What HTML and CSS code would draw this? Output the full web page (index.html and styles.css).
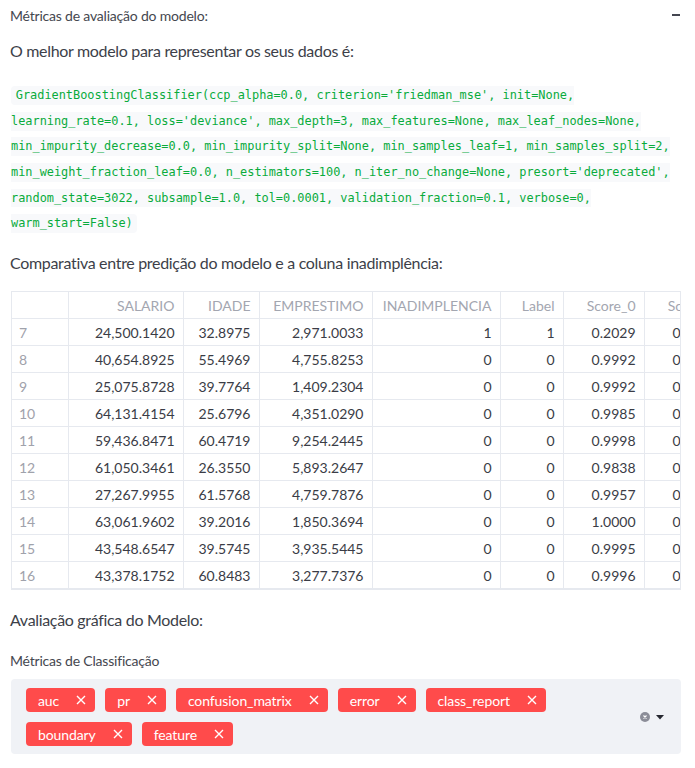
FILE: index.html
```html
<!DOCTYPE html>
<html lang="pt">
<head>
<meta charset="utf-8">
<title>Métricas</title>
<link rel="stylesheet" href="styles.css">
</head>
<body>
<div class="page">
  <div class="exp-head">
    <span>Métricas de avaliação do modelo:</span>
    <span class="minus"></span>
  </div>
  <p class="p1">O melhor modelo para representar os seus dados é:</p>
  <p class="codep"><code>GradientBoostingClassifier(ccp_alpha=0.0, criterion='friedman_mse', init=None, learning_rate=0.1, loss='deviance', max_depth=3, max_features=None, max_leaf_nodes=None, min_impurity_decrease=0.0, min_impurity_split=None, min_samples_leaf=1, min_samples_split=2, min_weight_fraction_leaf=0.0, n_estimators=100, n_iter_no_change=None, presort='deprecated', random_state=3022, subsample=1.0, tol=0.0001, validation_fraction=0.1, verbose=0, warm_start=False)</code></p>
  <p class="p2">Comparativa entre predição do modelo e a coluna inadimplência:</p>
  <div class="table-wrap">
    <table class="df">
      <colgroup>
        <col class="c-idx"><col class="c-sal"><col class="c-ida"><col class="c-emp"><col class="c-ina"><col class="c-lab"><col class="c-s0"><col class="c-s1">
      </colgroup>
      <thead>
        <tr><th></th><th>SALARIO</th><th>IDADE</th><th>EMPRESTIMO</th><th>INADIMPLENCIA</th><th>Label</th><th>Score_0</th><th>Score_1</th></tr>
      </thead>
      <tbody>
        <tr><td class="idx">7</td><td>24,500.1420</td><td>32.8975</td><td>2,971.0033</td><td>1</td><td>1</td><td>0.2029</td><td>0.7971</td></tr>
        <tr><td class="idx">8</td><td>40,654.8925</td><td>55.4969</td><td>4,755.8253</td><td>0</td><td>0</td><td>0.9992</td><td>0.0008</td></tr>
        <tr><td class="idx">9</td><td>25,075.8728</td><td>39.7764</td><td>1,409.2304</td><td>0</td><td>0</td><td>0.9992</td><td>0.0008</td></tr>
        <tr><td class="idx">10</td><td>64,131.4154</td><td>25.6796</td><td>4,351.0290</td><td>0</td><td>0</td><td>0.9985</td><td>0.0015</td></tr>
        <tr><td class="idx">11</td><td>59,436.8471</td><td>60.4719</td><td>9,254.2445</td><td>0</td><td>0</td><td>0.9998</td><td>0.0002</td></tr>
        <tr><td class="idx">12</td><td>61,050.3461</td><td>26.3550</td><td>5,893.2647</td><td>0</td><td>0</td><td>0.9838</td><td>0.0162</td></tr>
        <tr><td class="idx">13</td><td>27,267.9955</td><td>61.5768</td><td>4,759.7876</td><td>0</td><td>0</td><td>0.9957</td><td>0.0043</td></tr>
        <tr><td class="idx">14</td><td>63,061.9602</td><td>39.2016</td><td>1,850.3694</td><td>0</td><td>0</td><td>1.0000</td><td>0.0000</td></tr>
        <tr><td class="idx">15</td><td>43,548.6547</td><td>39.5745</td><td>3,935.5445</td><td>0</td><td>0</td><td>0.9995</td><td>0.0005</td></tr>
        <tr><td class="idx">16</td><td>43,378.1752</td><td>60.8483</td><td>3,277.7376</td><td>0</td><td>0</td><td>0.9996</td><td>0.0004</td></tr>
      </tbody>
    </table>
  </div>
  <p class="p3">Avaliação gráfica do Modelo:</p>
  <div class="ms-label">Métricas de Classificação</div>
  <div class="ms">
    <div class="tags">
      <span class="tag">auc<svg class="x" viewBox="0 0 10 10"><path d="M1 1L9 9M9 1L1 9"/></svg></span>
      <span class="tag">pr<svg class="x" viewBox="0 0 10 10"><path d="M1 1L9 9M9 1L1 9"/></svg></span>
      <span class="tag">confusion_matrix<svg class="x" viewBox="0 0 10 10"><path d="M1 1L9 9M9 1L1 9"/></svg></span>
      <span class="tag">error<svg class="x" viewBox="0 0 10 10"><path d="M1 1L9 9M9 1L1 9"/></svg></span>
      <span class="tag">class_report<svg class="x" viewBox="0 0 10 10"><path d="M1 1L9 9M9 1L1 9"/></svg></span>
      <span class="tag">boundary<svg class="x" viewBox="0 0 10 10"><path d="M1 1L9 9M9 1L1 9"/></svg></span>
      <span class="tag">feature<svg class="x" viewBox="0 0 10 10"><path d="M1 1L9 9M9 1L1 9"/></svg></span>
    </div>
    <div class="ms-icons">
      <svg class="clear" viewBox="0 0 12 12"><circle cx="6" cy="6" r="6" fill="#8b8d98"/><path d="M4.2 4.2L7.8 7.8M7.8 4.2L4.2 7.8" stroke="#fff" stroke-width="1.3"/></svg>
      <svg class="caret" viewBox="0 0 8 5"><path d="M0 0H8L4 4.5Z" fill="#262730"/></svg>
    </div>
  </div>
</div>
</body>
</html>
```
FILE: styles.css
```css
* { box-sizing: border-box; }
body {
  margin: 0;
  font-family: Lato, "Noto Sans", sans-serif;
  color: #31333f;
  background: #fff;
}
.page {
  padding: 0 14px 0 11px;
}
.exp-head {
  display: flex;
  justify-content: space-between;
  align-items: center;
  height: 30px;
  font-size: 14px;
  letter-spacing: -0.2px;
  color: #45474f;
  margin-left: -1px;
}
.minus {
  width: 8px;
  height: 2px;
  background: #444650;
  margin-right: 1px;
}
.p1, .p2, .p3 {
  margin: 0;
  font-size: 16px;
  line-height: 25.6px;
  letter-spacing: -0.32px;
  margin-left: -1px;
  color: #3d3f49;
}
.p1 { margin-top: 8px; }
.codep {
  margin: 17px 0 0;
  font-size: 16px;
  line-height: 25.6px;
}
.codep code {
  font-family: "DejaVu Sans Mono", "Liberation Mono", monospace;
  font-size: 11.9px;
  line-height: 12px;
  color: #09ab3b;
  background: #f8f9fb;
  padding: 0.2em 0.4em;
  border-radius: 4px;
}
.p2 { margin-top: 16px; }
.table-wrap {
  margin-top: 15px;
  width: 670px;
  height: 299px;
  border: 1px solid #e6e9ef;
  overflow: hidden;
}
.df {
  border-collapse: collapse;
  table-layout: fixed;
  width: 713px;
  font-size: 14px;
}
.c-idx { width: 56px; }
.c-sal { width: 115px; }
.c-ida { width: 76px; }
.c-emp { width: 113px; }
.c-ina { width: 128px; }
.c-lab { width: 63px; }
.c-s0 { width: 81px; }
.c-s1 { width: 81px; }
.df th, .df td {
  height: 27px;
  padding: 0 8px 0 7px;
  text-align: right;
  border-right: 1px solid #e6e9ef;
  border-bottom: 1px solid #e6e9ef;
  white-space: nowrap;
  overflow: hidden;
  font-weight: normal;
}
.df th {
  color: #a3a6b0;
}
.df td {
  color: #3a3c46;
}
.df td.idx {
  text-align: left;
  color: #9fa2ab;
}
.p3 { margin-top: 17px; }
.ms-label {
  margin-top: 19px;
  font-size: 14px;
  line-height: 20px;
  letter-spacing: -0.2px;
  color: #45474f;
  margin-left: -1px;
}
.ms {
  margin-top: 8px;
  width: 670px;
  height: 75px;
  background: #f0f2f6;
  border-radius: 4px;
  display: flex;
  align-items: center;
  padding: 9px 17px 8px 15px;
}
.tags {
  flex: 1;
  display: flex;
  flex-wrap: wrap;
  column-gap: 10px;
  row-gap: 10px;
  align-self: flex-start;
}
.tag {
  display: inline-flex;
  align-items: center;
  height: 24px;
  padding: 0 9px 0 12px;
  background: #ff4b4b;
  color: #fff;
  font-size: 14px;
  letter-spacing: -0.1px;
  border-radius: 4px;
}
.tag .x {
  width: 10px;
  height: 10px;
  margin-left: 17px;
  fill: none;
  stroke: #fff;
  stroke-width: 1.4;
}
.ms-icons {
  display: flex;
  align-items: center;
  gap: 6px;
}
.clear { width: 10px; height: 10px; }
.caret { width: 8px; height: 5px; }
```
